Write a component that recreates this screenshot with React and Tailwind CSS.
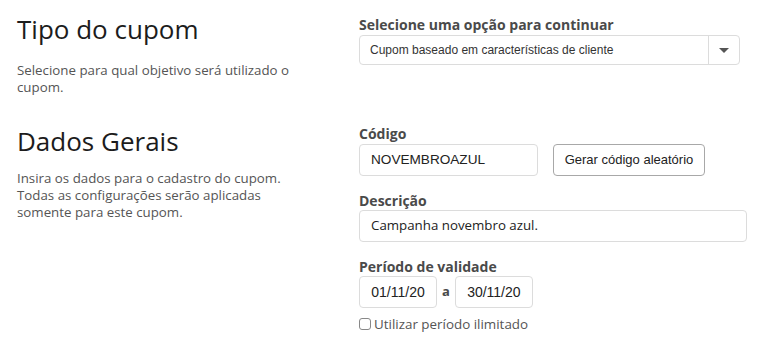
import React from "react";

const sans = "font-['Open_Sans',sans-serif]";
const arial = "font-['Liberation_Sans',Arial,sans-serif]";

function Label({ children, className = "" }) {
	return <p className={`${sans} text-[14px] leading-[18px] font-bold text-[#4a4a4a] ${className}`}>{children}</p>;
}

export default function App() {
	return (
		<div className={`${sans} bg-white w-[761px] h-[355px] overflow-hidden`}>
			<div className="grid grid-cols-[359px_1fr]">
				{/* Tipo do cupom */}
				<div className="pl-[17px] pt-[12px] h-[124px]">
					<h1 className="text-[26px] leading-[34px] font-medium text-[#1c1c1c]">Tipo do cupom</h1>
					<p className="mt-[16px] text-[13.3px] leading-[17px] text-[#555] w-[280px]">
						Selecione para qual objetivo será utilizado o cupom.
					</p>
				</div>
				<div className="pt-[16px]">
					<Label>Selecione uma opção para continuar</Label>
					<div className="mt-[1px] w-[381px] h-[30px] flex items-center rounded-[4px] border border-[#dcdcdc] bg-white">
						<span className={`${arial} flex-1 pl-[10px] text-[12px] text-[#333]`}>
							Cupom baseado em características de cliente
						</span>
						<div className="w-[31px] h-full border-l border-[#dcdcdc] flex items-center justify-center">
							<span className="w-0 h-0 border-l-[5px] border-r-[5px] border-t-[5px] border-l-transparent border-r-transparent border-t-[#555]" />
						</div>
					</div>
				</div>

				{/* Dados Gerais */}
				<div className="pl-[17px]">
					<h2 className="text-[26px] leading-[34px] font-medium text-[#1c1c1c]">Dados Gerais</h2>
					<p className="mt-[12px] text-[13.3px] leading-[17px] text-[#555] w-[280px]">
						Insira os dados para o cadastro do cupom. Todas as configurações serão aplicadas somente para este cupom.
					</p>
				</div>
				<div className="pt-[1px]">
					<Label>Código</Label>
					<div className="mt-[1px] flex gap-[15px]">
						<div className={`${arial} w-[179px] h-[32px] flex items-center pl-[11px] rounded-[4px] border border-[#dcdcdc] text-[13.6px] text-[#222]`}>
							NOVEMBROAZUL
						</div>
						<button className={`${arial} w-[152px] h-[32px] rounded-[4px] border border-[#a8a8a8] bg-white text-[13px] text-[#222]`}>
							Gerar código aleatório
						</button>
					</div>

					<Label className="mt-[16px]">Descrição</Label>
					<div className="w-[388px] h-[32px] flex items-center pl-[11px] rounded-[4px] border border-[#dcdcdc] text-[13.3px] text-[#222]">
						Campanha novembro azul.
					</div>

					<Label className="mt-[16px]">Período de validade</Label>
					<div className="flex items-center">
						<div className={`${arial} w-[78px] h-[32px] flex items-center justify-center rounded-[4px] border border-[#dcdcdc] text-[14px] text-[#222]`}>
							01/11/20
						</div>
						<span className="mx-[5px] text-[13px] font-bold text-[#4a4a4a]">a</span>
						<div className={`${arial} w-[78px] h-[32px] flex items-center justify-center rounded-[4px] border border-[#dcdcdc] text-[14px] text-[#222]`}>
							30/11/20
						</div>
					</div>
					<label className="mt-[8px] flex items-center gap-[3px] text-[13.4px] leading-[16px] text-[#555]">
						<span className="w-[12px] h-[12px] rounded-[3px] border border-[#888] bg-white" />
						Utilizar período ilimitado
					</label>
				</div>
			</div>
		</div>
	);
}
